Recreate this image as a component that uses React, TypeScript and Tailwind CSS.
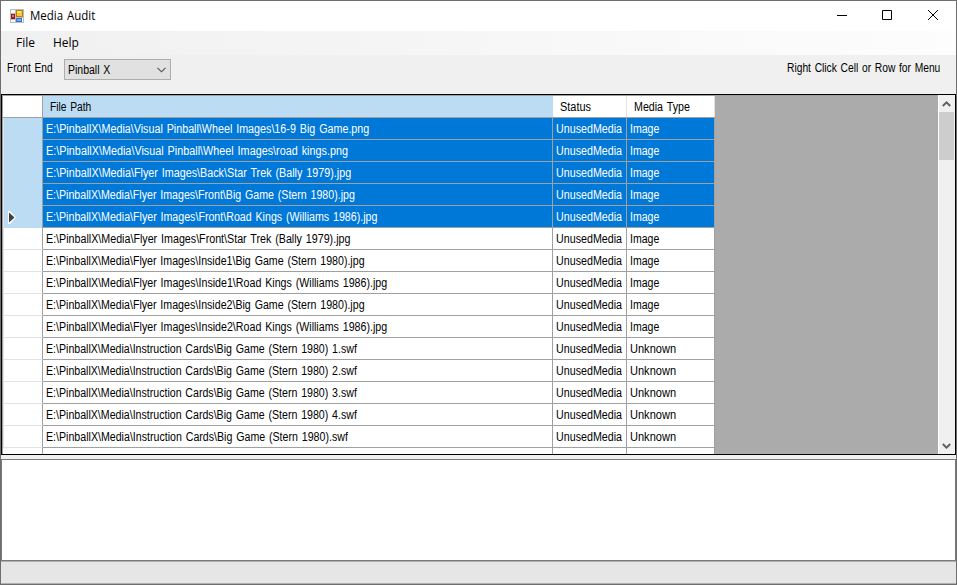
import { useLayoutEffect, useRef } from "react";

const UI = 'font-["Liberation_Sans",Arial,sans-serif]';

/** A single line of text condensed so that it fills the given width. */
function Label({ text, width, className = "" }: { text: string; width: number; className?: string }) {
  const ref = useRef<HTMLSpanElement>(null);
  useLayoutEffect(() => {
    const el = ref.current;
    if (!el) return;
    el.style.transform = `scaleX(${width / el.offsetWidth})`;
  }, [text, width]);
  return (
    <span className={`block shrink-0 whitespace-pre ${className}`} style={{ width }}>
      <span ref={ref} className="inline-block origin-left [word-spacing:1px]">
        {text}
      </span>
    </span>
  );
}

const rows: [string, number, string][] = [
  ["Visual Pinball\\Wheel Images\\16-9 Big Game.png", 323, "Image"],
  ["Visual Pinball\\Wheel Images\\road kings.png", 302, "Image"],
  ["Flyer Images\\Back\\Star Trek (Bally 1979).jpg", 305, "Image"],
  ["Flyer Images\\Front\\Big Game (Stern 1980).jpg", 309, "Image"],
  ["Flyer Images\\Front\\Road Kings (Williams 1986).jpg", 331, "Image"],
  ["Flyer Images\\Front\\Star Trek (Bally 1979).jpg", 304, "Image"],
  ["Flyer Images\\Inside1\\Big Game (Stern 1980).jpg", 319, "Image"],
  ["Flyer Images\\Inside1\\Road Kings (Williams 1986).jpg", 341, "Image"],
  ["Flyer Images\\Inside2\\Big Game (Stern 1980).jpg", 319, "Image"],
  ["Flyer Images\\Inside2\\Road Kings (Williams 1986).jpg", 341, "Image"],
  ["Instruction Cards\\Big Game (Stern 1980) 1.swf", 311, "Unknown"],
  ["Instruction Cards\\Big Game (Stern 1980) 2.swf", 311, "Unknown"],
  ["Instruction Cards\\Big Game (Stern 1980) 3.swf", 311, "Unknown"],
  ["Instruction Cards\\Big Game (Stern 1980) 4.swf", 311, "Unknown"],
  ["Instruction Cards\\Big Game (Stern 1980).swf", 302, "Unknown"],
];

function AppIcon() {
  return (
    <svg width="14" height="14" viewBox="0 0 14 14" shapeRendering="crispEdges">
      <path d="M0 0h14v14H0z" fill="#b9bcc2" />
      <path d="M1 1h4v3H1zM1 11h4v2H1zM12 9h1v4h-1z" fill="#f6f7f9" />
      <path d="M6 1h7v7H6z" fill="#b98008" />
      <path d="M7 2h5v5H7z" fill="#f7c736" />
      <path d="M7 2h4v2H7z" fill="#ffe07b" />
      <path d="M1 5h4v5H1z" fill="#a11b13" />
      <path d="M2 6h2v2H2z" fill="#e8755f" />
      <path d="M6 9h6v4H6z" fill="#3973cc" />
      <path d="M7 10h4v2H7z" fill="#75a9ee" />
    </svg>
  );
}

function TitleBar() {
  return (
    <header className="flex h-[30px] shrink-0 items-center bg-white pl-[9px]">
      <AppIcon />
      <Label text="Media Audit" width={65} className="ml-1.5 text-[12px] leading-[28px]" />
      <div className="ml-auto flex">
        <svg width="120" height="30" viewBox="836 1 120 30" fill="none" stroke="#000">
          <path d="M837 15.5h10" />
          <path d="M882.5 10.5h9v9h-9z" />
          <path d="M928 10l10 10M938 10l-10 10" strokeWidth="1" />
        </svg>
      </div>
    </header>
  );
}

function Row({ row, index }: { row: [string, number, string]; index: number }) {
  const selected = index < 5;
  const cell = `flex items-center border-r border-b border-[#a0a0a0] pl-[3px] ${selected ? "bg-[#0078d7] text-white" : "bg-white text-black"}`;
  return (
    <div className="grid h-[22px] shrink-0 grid-cols-[40px_510px_74px_88px]">
      <div
        className={`flex items-center border-r border-l border-r-[#a0a0a0] border-l-[#e3e3e3] pl-[4px] ${selected ? "bg-[#bcdcf4]" : "border-b border-b-[#e3e3e3] bg-white"}`}
      >
        {index === 4 && (
          <svg width="8" height="13" viewBox="0 0 8 13">
            <path d="M0 0h2l6 6.5L2 13H0z" fill="#fff" />
            <path d="M1 1.5v10l5.5-5z" fill="#404040" />
          </svg>
        )}
      </div>
      <div className={cell}>
        <Label text={"E:\\PinballX\\Media\\" + row[0]} width={row[1]} />
      </div>
      <div className={cell}>
        <Label text="UnusedMedia" width={66} />
      </div>
      <div className={cell}>
        <Label text={row[2]} width={row[2] === "Image" ? 29 : 46} />
      </div>
    </div>
  );
}

function ScrollBar() {
  return (
    <div className="flex w-[17px] flex-col border-l border-white bg-[#f0f0f0]">
      <div className="flex h-[17px] items-center justify-center pr-px">
        <svg width="9" height="6" viewBox="0 0 9 6" fill="none" stroke="#606060" strokeWidth="2">
          <path d="M.8 5l3.7-3.6L8.2 5" />
        </svg>
      </div>
      <div className="h-[48px] w-[15px] bg-[#cdcdcd]" />
      <div className="mt-auto flex h-[17px] items-center justify-center pr-px">
        <svg width="9" height="6" viewBox="0 0 9 6" fill="none" stroke="#606060" strokeWidth="2">
          <path d="M.8 1l3.7 3.6L8.2 1" />
        </svg>
      </div>
    </div>
  );
}

export default function App() {
  return (
    <div className={`flex h-[585px] w-[957px] flex-col overflow-hidden border border-[#6e6e6e] bg-[#f0f0f0] text-[12px] leading-[14px] text-black ${UI}`}>
      <div className="flex shrink-0 flex-col font-['Open_Sans','Noto_Sans',sans-serif]">
        <TitleBar />
        <nav className="flex h-6 items-center bg-linear-to-r from-[#f0f0f0] to-[#fdfdfd] pl-[15px] text-[12px]">
          <Label text="File" width={19} />
          <Label text="Help" width={26} className="ml-[18px]" />
        </nav>
      </div>
      <div className="flex h-[39px] shrink-0 items-start pl-[6px]">
        <Label text="Front End" width={46} className="mt-[6px]" />
        <div className="mt-[4px] ml-[11px] flex h-[21px] w-[107px] items-center justify-between border border-[#adadad] bg-[#e1e1e1] pr-[4px] pl-[3px]">
          <Label text="Pinball X" width={42} />
          <svg width="9" height="6" viewBox="0 0 9 6" fill="none" stroke="#505050" strokeWidth="1.1">
            <path d="M.5 .8l4 4 4-4" />
          </svg>
        </div>
        <Label text="Right Click Cell or Row for Menu" width={153} className="mt-[6px] mr-[16px] ml-auto" />
      </div>
      <main className="flex h-[361px] shrink-0 border border-black bg-[#ababab]">
        <div className="flex min-w-0 flex-1 flex-col overflow-hidden border-t border-l border-[#a0a0a0]">
          <div className="grid h-[22px] w-[712px] shrink-0 grid-cols-[40px_510px_74px_88px] border-b border-[#a0a0a0]">
            <div className="border-r border-[#a0a0a0] bg-white" />
            <div className="flex items-center bg-[#bcdcf4] pl-[7px]">
              <Label text="File Path" width={41} />
            </div>
            <div className="flex items-center border-r border-[#e3e3e3] bg-white pl-[7px]">
              <Label text="Status" width={31} />
            </div>
            <div className="flex items-center border-r border-[#e3e3e3] bg-white pl-[7px]">
              <Label text="Media Type" width={56} />
            </div>
          </div>
          {rows.map((row, i) => (
            <Row key={i} row={row} index={i} />
          ))}
          <div className="grid h-[6px] shrink-0 grid-cols-[40px_510px_74px_88px]">
            {[0, 1, 2, 3].map((i) => (
              <div key={i} className="border-r border-[#a0a0a0] bg-white" />
            ))}
          </div>
        </div>
        <ScrollBar />
      </main>
      <div className="mt-[4px] h-[102px] shrink-0 border border-[#7a7a7a] bg-white" />
      <footer className="h-[23px] shrink-0 border-t border-b border-[#b0b0b0] bg-[#e6e6e6]" />
    </div>
  );
}
